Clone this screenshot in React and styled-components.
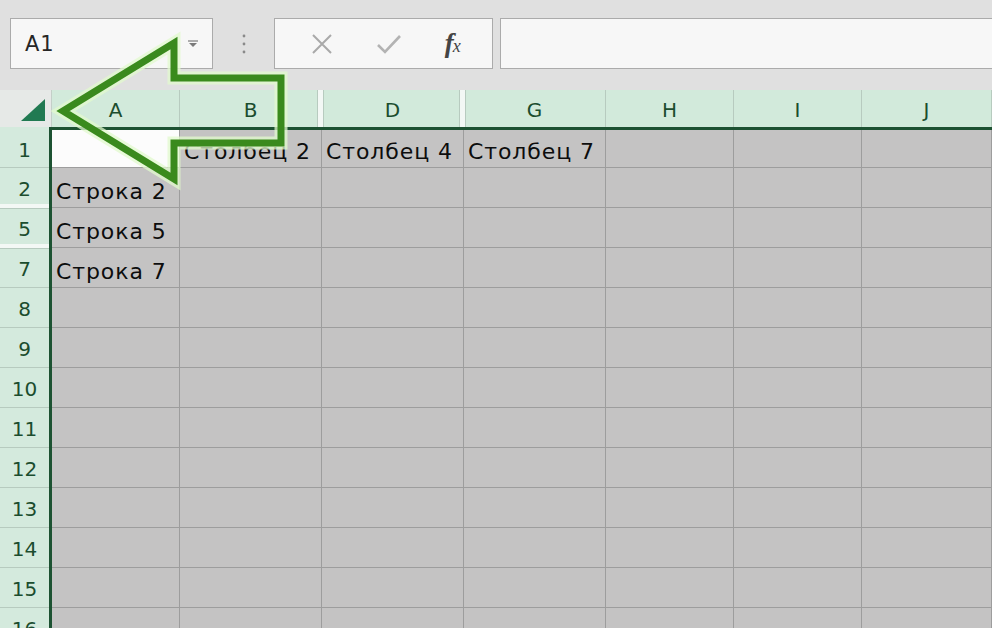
import React from 'react';
import styled, { createGlobalStyle, css } from 'styled-components';

const GlobalStyle = createGlobalStyle`
  html, body {
    margin: 0;
    padding: 0;
    background: #e0e0e0;
  }
  * { box-sizing: border-box; }
`;

const Screen = styled.div`
  position: relative;
  width: 992px;
  height: 628px;
  overflow: hidden;
  background: #e0e0e0;
  font-family: "DejaVu Sans", "Noto Sans", sans-serif;
`;

const Toolbar = styled.div`
  display: flex;
  align-items: center;
  height: 90px;
  padding: 0 0 3px 10px;
`;

const NameBox = styled.div`
  display: flex;
  align-items: center;
  justify-content: space-between;
  width: 203px;
  height: 51px;
  padding: 0 12px 0 14px;
  background: #f7f7f7;
  border: 1px solid #ababab;
  font-size: 21px;
  letter-spacing: 1px;
  color: #262626;
`;

const Dots = styled.div`
  display: flex;
  justify-content: center;
  width: 61px;
`;

const FxButtons = styled.div`
  display: flex;
  align-items: center;
  justify-content: space-around;
  width: 219px;
  height: 51px;
  padding: 0 10px 0 14px;
  background: #f7f7f7;
  border: 1px solid #ababab;
`;

const FxLabel = styled.span`
  font-family: "Liberation Serif", "DejaVu Serif", serif;
  font-style: italic;
  font-weight: bold;
  font-size: 27px;
  line-height: 1;
  color: #444;

  small {
    font-size: 18px;
    font-weight: normal;
    margin-left: -1px;
  }
`;

const FormulaInput = styled.div`
  flex: 1;
  height: 51px;
  margin-left: 7px;
  background: #f7f7f7;
  border: 1px solid #ababab;
  border-right: none;
`;

const HeaderRow = styled.div`
  display: flex;
  height: 37px;
`;

const Corner = styled.div`
  width: 52px;
  background: #e6e9e7;
  border-right: 1px solid #c4cfc8;
  display: flex;
  align-items: flex-end;
  justify-content: flex-end;
  padding: 0 6px 6px 0;
`;

const ColHead = styled.div`
  position: relative;
  flex: ${p => (p.$w ? `0 0 ${p.$w}px` : '1')};
  display: flex;
  align-items: center;
  justify-content: center;
  padding-top: 2px;
  background: #d2eadb;
  border-right: 1px solid #b7cbbf;
  font-size: 20px;
  color: #1b4d2e;

  ${p => p.$hiddenBefore && css`
    &::before {
      content: '';
      position: absolute;
      left: -5px;
      top: 0;
      bottom: 0;
      width: 5px;
      background: #f3f8f5;
      border-left: 1px solid #b7cbbf;
      border-right: 1px solid #b7cbbf;
    }
  `}
`;

const Body = styled.div`
  display: flex;
`;

const RowHeads = styled.div`
  display: flex;
  flex-direction: column;
  width: 49px;
  background: #d4eadd;
`;

const RowHead = styled.div`
  position: relative;
  height: ${p => p.$h}px;
  display: flex;
  align-items: center;
  justify-content: center;
  padding-top: ${p => (p.$first ? 5 : 2)}px;
  border-bottom: 1px solid #b7cbbf;
  font-size: 20px;
  color: #1b4d2e;

  ${p => p.$hiddenBefore && css`
    &::before {
      content: '';
      position: absolute;
      left: 0;
      right: 0;
      top: -4px;
      height: 4px;
      background: #f3f8f5;
      border-bottom: 1px solid #b7cbbf;
    }
  `}
`;

const Cells = styled.div`
  flex: 1;
  border-top: 3px solid #1d5232;
  border-left: 3px solid #1d5232;
`;

const Row = styled.div`
  display: flex;
  height: ${p => p.$h}px;
`;

const Cell = styled.div`
  flex: ${p => (p.$w ? `0 0 ${p.$w}px` : '1')};
  display: flex;
  align-items: flex-end;
  padding: 0 0 3px 4px;
  background: ${p => (p.$active ? '#fcfcfc' : '#c4c3c3')};
  border-right: 1px solid #9d9d9d;
  border-bottom: 1px solid #9d9d9d;
  font-size: 22px;
  letter-spacing: 0.9px;
  color: #0d0d0d;
  white-space: nowrap;
`;

const ArrowLayer = styled.svg`
  position: absolute;
  left: 0;
  top: 0;
  pointer-events: none;
`;

const cols = [
  { id: 'A', w: 128 },
  { id: 'B', w: 142 },
  { id: 'D', w: 142, hidden: true },
  { id: 'G', w: 142, hidden: true },
  { id: 'H', w: 128 },
  { id: 'I', w: 128 },
  { id: 'J' },
];

const rows = [
  { n: '1', h: 38, cells: { B: 'Столбец 2', D: 'Столбец 4', G: 'Столбец 7' } },
  { n: '2', h: 40, cells: { A: 'Строка 2' } },
  { n: '5', h: 40, hidden: true, cells: { A: 'Строка 5' } },
  { n: '7', h: 40, hidden: true, cells: { A: 'Строка 7' } },
  ...['8', '9', '10', '11', '12', '13', '14', '15', '16'].map(n => ({ n, h: 40, cells: {} })),
];

const arrowPoints = '63,111 174,43 174,78 281,78 281,143 174,143 174,179';

const App = () => {
  return (
    <Screen>
      <GlobalStyle />
      <Toolbar>
        <NameBox>
          <span>A1</span>
          <svg width="14" height="10" viewBox="0 0 14 10">
            <path d="M2 2h10" stroke="#7a7a7a" strokeWidth="1.2" />
            <path d="M3 4h8l-4 4z" fill="#7a7a7a" />
          </svg>
        </NameBox>
        <Dots>
          <svg width="4" height="22" viewBox="0 0 4 22">
            <circle cx="2" cy="3" r="1.4" fill="#8a8a8a" />
            <circle cx="2" cy="11" r="1.4" fill="#8a8a8a" />
            <circle cx="2" cy="19" r="1.4" fill="#8a8a8a" />
          </svg>
        </Dots>
        <FxButtons>
          <svg width="24" height="22" viewBox="0 0 24 22">
            <path d="M3 2l18 18M21 2L3 20" stroke="#a9a9a9" strokeWidth="2" />
          </svg>
          <svg width="26" height="22" viewBox="0 0 26 22">
            <path d="M2 12l7 7L24 3" stroke="#b3b3b3" strokeWidth="2.6" fill="none" />
          </svg>
          <FxLabel>f<small>x</small></FxLabel>
        </FxButtons>
        <FormulaInput />
      </Toolbar>

      <HeaderRow>
        <Corner>
          <svg width="24" height="22" viewBox="0 0 24 22">
            <path d="M24 0V22H0z" fill="#217a52" />
          </svg>
        </Corner>
        {cols.map(c => (
          <ColHead key={c.id} $w={c.w} $hiddenBefore={c.hidden}>{c.id}</ColHead>
        ))}
      </HeaderRow>

      <Body>
        <RowHeads>
          {rows.map((r, i) => (
            <RowHead key={r.n} $h={i === 0 ? 41 : r.h} $first={i === 0} $hiddenBefore={r.hidden}>{r.n}</RowHead>
          ))}
        </RowHeads>
        <Cells>
          {rows.map((r, i) => (
            <Row key={r.n} $h={r.h}>
              {cols.map(c => (
                <Cell key={c.id} $w={c.w} $active={i === 0 && c.id === 'A'}>
                  {r.cells[c.id]}
                </Cell>
              ))}
            </Row>
          ))}
        </Cells>
      </Body>

      <ArrowLayer width="300" height="200" viewBox="0 0 300 200">
        <polygon
          points={arrowPoints}
          fill="none"
          stroke="rgba(225,250,205,0.75)"
          strokeWidth="13"
        />
        <polygon
          points={arrowPoints}
          fill="none"
          stroke="#3a8a1d"
          strokeWidth="7"
        />
      </ArrowLayer>
    </Screen>
  );
};

export default App;
